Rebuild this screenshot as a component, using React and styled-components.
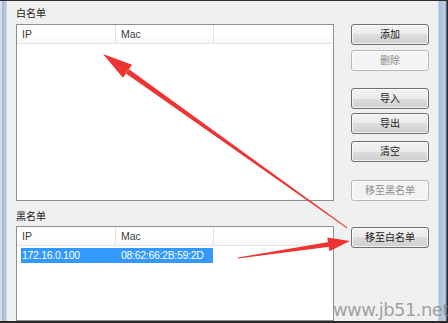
import React from 'react'
import styled, { createGlobalStyle } from 'styled-components'

const GlobalStyle = createGlobalStyle`
  html, body {
    margin: 0;
    padding: 0;
    background: #f0f0f0;
  }
  body {
    width: 448px;
    height: 323px;
    overflow: hidden;
    font-family: "Noto Sans CJK SC", "Liberation Sans", sans-serif;
    font-size: 10px;
  }
`

const Window = styled.div`
  position: relative;
  display: flex;
  width: 448px;
  height: 323px;
  box-sizing: border-box;
  border-top: 1px solid #2e2e2e;
  border-bottom: 2px solid #2a2a2a;
  overflow: hidden;
`

const LeftFrame = styled.div`
  width: 8px;
  flex: none;
  background: linear-gradient(to right, #d9dde2 0px, #d9dde2 2px, #9fb8d2 2px, #b6cbe0 6px, #e6ebf0 7px, #f4f4f4 8px);
`

const RightFrame = styled.div`
  width: 11px;
  flex: none;
  background: linear-gradient(to right, #fafafa 0px, #e3e8ee 1px, #a9c0d8 2px, #bcd0e4 8px, #8aa3bc 9px, #2a2a2a 10px);
`

const Main = styled.div`
  flex: 1;
  background: #f0f0f0;
  padding: 0 8px 0 8px;
  display: flex;
  flex-direction: column;
`

const Label = styled.div`
  height: ${({ h }) => h}px;
  padding-top: ${({ pt }) => pt || 0}px;
  display: flex;
  align-items: center;
  color: #1a1a1a;
  font-size: 10px;
  box-sizing: border-box;
`

const Section = styled.div`
  display: flex;
  gap: 17px;
  height: ${({ h }) => h}px;
`

const ListBox = styled.div`
  width: 318px;
  flex: none;
  box-sizing: border-box;
  border: 1px solid #8e8f8f;
  background: #fff;
  display: flex;
  flex-direction: column;
`

const HeaderRow = styled.div`
  display: flex;
  height: 18px;
  border-bottom: 1px solid #e5e5e5;
  background: linear-gradient(#ffffff, #ffffff 60%, #f5f6f7);
`

const HeaderCell = styled.div`
  width: ${({ w }) => w}px;
  box-sizing: border-box;
  padding-left: 5px;
  border-right: 1px solid #e3e4e6;
  display: flex;
  align-items: center;
  font-family: "Liberation Sans", "Noto Sans", sans-serif;
  font-size: 10.5px;
  color: #3c3c3c;
`

const Row = styled.div`
  display: flex;
  margin: 2px 0 0 4px;
  width: 192px;
  height: 15px;
  background: ${({ selected }) => (selected ? '#3399ff' : 'transparent')};
  color: ${({ selected }) => (selected ? '#fff' : '#000')};
`

const Cell = styled.div`
  width: ${({ w }) => w}px;
  box-sizing: border-box;
  padding-left: 1px;
  display: flex;
  align-items: center;
  font-family: "Liberation Sans", "Noto Sans", sans-serif;
  font-size: 10.5px;
  letter-spacing: -0.3px;
  white-space: nowrap;
`

const ButtonColumn = styled.div`
  display: flex;
  flex-direction: column;
  width: 78px;
`

const Button = styled.button`
  width: 78px;
  height: 21px;
  margin-top: ${({ top }) => top || 0}px;
  box-sizing: border-box;
  border-radius: 3px;
  padding: 0;
  font-family: "Noto Sans CJK SC", sans-serif;
  font-size: 10px;
  line-height: 1;
  border: 1px solid ${({ disabled }) => (disabled ? '#b5b9bc' : '#707070')};
  color: ${({ disabled }) => (disabled ? '#8d8d8d' : '#1a1a1a')};
  background: ${({ disabled }) =>
    disabled
      ? '#f4f4f4'
      : 'linear-gradient(#f2f2f2, #ebebeb 50%, #dddddd 50%, #cfcfcf)'};
  box-shadow: inset 0 0 0 1px ${({ disabled }) => (disabled ? '#fbfbfb' : 'rgba(255,255,255,0.7)')};
`

const Overlay = styled.svg`
  position: absolute;
  left: 0;
  top: 0;
  pointer-events: none;
`

const Watermark = styled.div`
  position: absolute;
  left: 333px;
  top: 298px;
  font-family: "DejaVu Sans", sans-serif;
  font-size: 18px;
  letter-spacing: -0.6px;
  color: rgba(125, 125, 125, 0.7);
`

const Header = () => (
  <HeaderRow>
    <HeaderCell w={99}>IP</HeaderCell>
    <HeaderCell w={98}>Mac</HeaderCell>
  </HeaderRow>
)

const App = () => (
  <>
    <GlobalStyle />
    <Window>
      <LeftFrame />
      <Main>
        <Label h={24}>白名单</Label>
        <Section h={177}>
          <ListBox>
            <Header />
          </ListBox>
          <ButtonColumn>
            <Button>添加</Button>
            <Button disabled top={5}>删除</Button>
            <Button top={17}>导入</Button>
            <Button top={4}>导出</Button>
            <Button top={7}>清空</Button>
            <Button disabled top={18}>移至黑名单</Button>
          </ButtonColumn>
        </Section>
        <Label h={26} pt={4}>黑名单</Label>
        <Section h={100}>
          <ListBox>
            <Header />
            <Row selected>
              <Cell w={99}>172.16.0.100</Cell>
              <Cell w={93}>08:62:66:2B:59:2D</Cell>
            </Row>
          </ListBox>
          <ButtonColumn>
            <Button top={1}>移至白名单</Button>
          </ButtonColumn>
        </Section>
      </Main>
      <RightFrame />
      <Overlay width="448" height="323" viewBox="0 0 448 323">
        <polygon
          points="347.4,226.4 346.8,227.2 126.0,72.4 129.0,68.2"
          fill="#ee3333"
        />
        <polygon points="103,53 132.1,63.8 122.9,76.8" fill="#ee3333" />
        <polygon
          points="238.1,257.6 237.9,256.4 328.9,240.9 329.6,245.8"
          fill="#ee3333"
        />
        <polygon points="350,240 327.3,236.4 329.4,250.2" fill="#ee3333" />
      </Overlay>
      <Watermark>www.jb51.net</Watermark>
    </Window>
  </>
)

export default App
